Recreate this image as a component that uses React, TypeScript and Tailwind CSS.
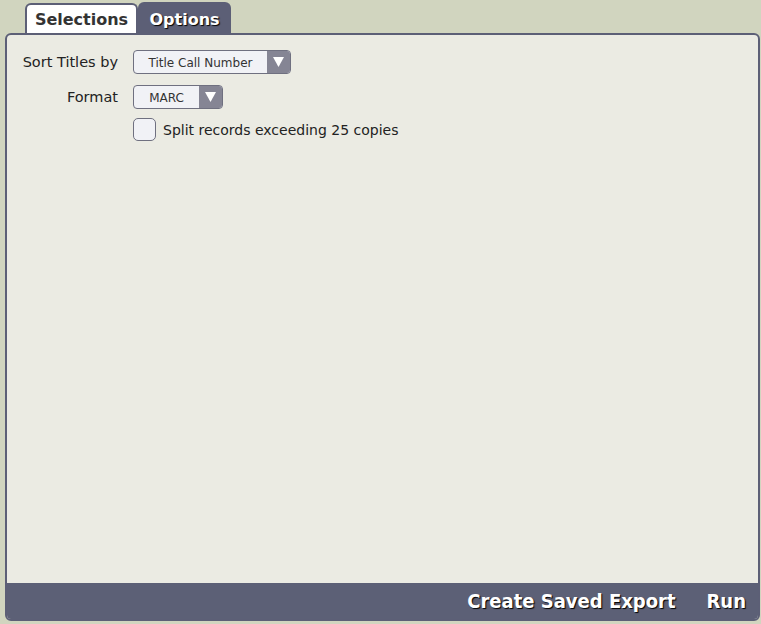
import React from "react";

function Select({ label, width }: { label: string; width: string }) {
  return (
    <div
      className={`flex h-[24px] ${width} rounded-[4px] border border-[#6f7080] bg-[#f1f2f6] overflow-hidden`}
    >
      <div className="flex-1 flex items-center justify-center pt-[1px] text-[12px] text-[#333]">
        {label}
      </div>
      <div className="w-[23px] bg-[#858594] flex items-center justify-center">
        <svg width="11" height="10" viewBox="0 0 11 10">
          <polygon points="0,0 11,0 5.5,10" fill="#ffffff" />
        </svg>
      </div>
    </div>
  );
}

export default function App() {
  return (
    <div
      className="w-[761px] h-[624px] bg-[#d1d5bf] flex flex-col pt-[2px] pl-[5px] pr-[1px] pb-[3px]"
      style={{ fontFamily: "Tahoma, 'DejaVu Sans', Verdana, sans-serif" }}
    >
      <div className="flex items-end pl-[20px] h-[31px]">
        <div className="w-[113px] h-[30px] bg-white border-2 border-b-0 border-[#5c5f76] rounded-t-[6px] flex items-center justify-center pt-[2px] text-[16px] font-bold text-[#333]">
          Selections
        </div>
        <div
          className="w-[93px] h-[31px] bg-[#5c5f76] rounded-t-[6px] flex items-center justify-center pt-[4px] text-[16px] font-bold text-white"
          style={{ textShadow: "1px 1px 1px #000" }}
        >
          Options
        </div>
      </div>
      <div className="flex-1 flex flex-col border-2 border-[#5c5f76] rounded-[6px] bg-[#ebebe3] overflow-hidden">
        <div className="flex-1 pt-[15px] text-[14.5px] text-[#222]">
          <div className="flex items-center">
            <div className="w-[126px] text-right pr-[15px] pt-[1px]">Sort Titles by</div>
            <Select label="Title Call Number" width="w-[158px]" />
          </div>
          <div className="flex items-center mt-[11px]">
            <div className="w-[126px] text-right pr-[15px] pt-[1px]">Format</div>
            <Select label="MARC" width="w-[90px]" />
          </div>
          <div className="flex items-center mt-[9px]">
            <div className="w-[126px]" />
            <div className="w-[23px] h-[23px] rounded-[5px] border border-[#6f7080] bg-[#f1f2f6]" />
            <div className="ml-[7px] text-[14px] pt-[1px]">Split records exceeding 25 copies</div>
          </div>
        </div>
        <div
          className="h-[36px] bg-[#5c6076] flex items-center justify-end gap-[31px] pr-[12px] text-[20px] font-bold text-white"
          style={{ textShadow: "1px 1px 1px #000", fontFamily: "'DejaVu Sans Condensed', 'DejaVu Sans', sans-serif" }}
        >
          <span>Create Saved Export</span>
          <span>Run</span>
        </div>
      </div>
    </div>
  );
}
